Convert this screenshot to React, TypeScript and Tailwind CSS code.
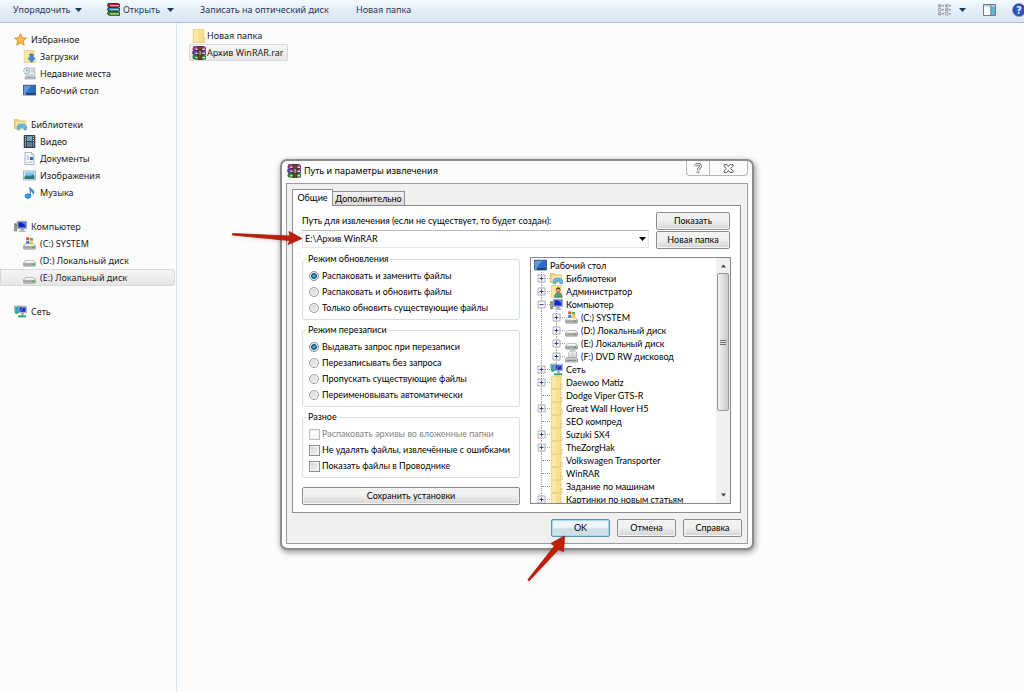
import { useState } from 'react'
import type { ReactNode } from 'react'

type IconName =
  | 'star' | 'downloads' | 'recent' | 'desktop' | 'libraries' | 'video' | 'documents'
  | 'pictures' | 'music' | 'computer' | 'system' | 'drive' | 'dvd' | 'network'
  | 'folder' | 'user' | 'rar' | 'books'

const driveBody = (
  <>
    <path d="M3.5 8h9L15.5 10.8v2.9q0 1.3-1.3 1.3H1.8Q.5 15 .5 13.7v-2.9z" fill="#c4c6c8" stroke="#8c8f92" strokeWidth=".8" />
    <path d="M3.8 8.4h8.4l2.4 2.4H1.4z" fill="#f6f6f6" />
    <path d="M1 11.4h14v2.6H1z" fill="#a2a5a7" />
    <path d="M11 11.8h3v1.8h-3z" fill="#4fae3a" />
  </>
)

const folderBody = (
  <>
    <path d="M1.5.5h12.2v15H1.5z" fill="#f7df8e" stroke="#e6c66c" strokeWidth=".8" />
    <path d="M2.2 1.2h5v13.6h-5z" fill="#fae8a8" />
    <path d="M13 10.5h2.2v5H13z" fill="#fdf6da" stroke="#c9ae68" strokeWidth=".6" />
  </>
)

const bookStack = (
  <>
    <path d="M2 .5h12l1.5 1.5v3H3.5L1 4z" fill="#b8379f" stroke="#4b1442" strokeWidth=".8" />
    <path d="M4 3h11v1.6H4z" fill="#f0d9ec" />
    <path d="M1 5.5h13l1.5 1v3.5H3L.8 9z" fill="#7a45b0" stroke="#2a1450" strokeWidth=".8" />
    <path d="M4 7.6h11v1.5H4z" fill="#dbe4f7" />
    <path d="M1.5 10.5h13l1 1.2V15H3.5L1 14z" fill="#2f9c3c" stroke="#0e4315" strokeWidth=".8" />
    <path d="M4 12.7h11v1.4H4z" fill="#dcf3d9" />
  </>
)

const drawings: Record<IconName, ReactNode> = {
  star: (
    <path
      d="M8 .8l2.1 4.9 5.3.5-4 3.5 1.2 5.3L8 12.2 3.4 15l1.2-5.3-4-3.5 5.3-.5z"
      fill="#fdbb3d" stroke="#e08127" strokeLinejoin="round"
    />
  ),
  downloads: (
    <>
      {folderBody}
      <path d="M8.5 5h4v5H15l-4.5 5.2L6 10h2.5z" fill="#2f8fe0" stroke="#1c63ad" strokeWidth=".7" />
    </>
  ),
  recent: (
    <>
      <path d="M4.5 1.5h10v11h-10z" fill="#eef1f3" stroke="#9aa4ac" strokeWidth=".9" />
      <path d="M6 9.5h7M6 11.3h7M9.5 4h4M9.5 6h4" stroke="#aab4bd" />
      <path d="M2.5 12.5h12.8v2.3H2.5z" fill="#b9c1c8" stroke="#8b959d" strokeWidth=".7" />
      <circle cx="4.6" cy="4.6" r="3.8" fill="#e3f0f6" stroke="#8fa9b8" />
      <path d="M4.6 2.4v2.4h2" fill="none" stroke="#577a8d" />
    </>
  ),
  desktop: (
    <>
      <path d="M.5 1.5h15v12H.5z" fill="#2f6cc4" stroke="#27436f" />
      <path d="M1 2h9L3 11H1z" fill="#5f9ae0" />
      <path d="M1 11.3h14v1.8H1z" fill="#213a5c" />
      <path d="M1 11.3h2.5v1.8H1z" fill="#9cc4ea" />
    </>
  ),
  libraries: (
    <>
      <path d="M.6 2h5l1.2 1.6h7.6V13H.6z" fill="#f2d675" stroke="#cfa94a" strokeWidth=".8" />
      <path d="M2.5 4.6h12.8v8H2.5z" fill="#fbe9a5" />
      <path d="M4 14.6V9.8L6 7.6h7l2.3 2.2v4.8h-3v-3.3H7v3.3z" fill="#6cbbe8" stroke="#3b8ec4" strokeWidth=".8" />
    </>
  ),
  video: (
    <>
      <path d="M1.5.5h13v15h-13z" fill="#27323c" stroke="#1a222a" />
      <path d="M4.5 1.5h7v6h-7z" fill="#6fb1dc" />
      <path d="M4.5 8.5h7v6h-7z" fill="#4a86b8" />
      <path d="M5 6l2.5-2.5L11 7M5 13l3-2.5 3 2" fill="none" stroke="#b85f4a" />
      <path d="M3 1v14M13 1v14" stroke="#e4e9ed" strokeWidth="1.2" strokeDasharray="1.5 1.2" />
    </>
  ),
  documents: (
    <>
      <path d="M2.5.5h8L13.5 3.5v12h-11z" fill="#fbfcfd" stroke="#8f9eae" />
      <path d="M10.5.5v3h3" fill="#dbe4ee" stroke="#8f9eae" strokeWidth=".8" />
      <path d="M4.5 5h3M4.5 7h3M4.5 9h3M4.5 12.5h7" stroke="#8fa6c0" strokeWidth=".9" />
      <path d="M8.5 6h4v4h-4z" fill="#2c6cb8" />
    </>
  ),
  pictures: (
    <>
      <path d="M.5 2.5h15v11H.5z" fill="#fdfdfd" stroke="#8c9aa6" />
      <path d="M2 4h12v8H2z" fill="#79c3ee" />
      <path d="M2 9c3-2 5 0 7-.8s4-1 5-.4V12H2z" fill="#2c8477" />
      <path d="M2 10.8h12V12H2z" fill="#245c88" />
    </>
  ),
  music: (
    <>
      <path d="M8 1.2c.6 2.4 5.5 3.2 5.6 6.2 0 1.6-.7 2.5-1.2 3 .2-2.6-1.6-3.8-3-4.2v6z" fill="#2f93dc" stroke="#1c6cb2" strokeWidth=".6" />
      <ellipse cx="6" cy="12.4" rx="3.6" ry="2.9" fill="#3aa0e8" stroke="#1c6cb2" strokeWidth=".7" />
    </>
  ),
  computer: (
    <>
      <path d="M.6 4.5h2.8v9H.6z" fill="#8fa08d" stroke="#5e6b60" strokeWidth=".7" />
      <path d="M1 6h2" stroke="#3fa645" strokeWidth="1.2" />
      <path d="M4 1.5h11.5v9H4z" fill="#b9c2d8" stroke="#7e879c" strokeWidth=".8" />
      <path d="M5.3 2.7h9v6.6h-9z" fill="#1226c0" />
      <path d="M9 2.7h5.3v4z" fill="#5f7cf0" />
      <path d="M8 10.5h4v2H8zM6 12.8h8v1.6H6z" fill="#9aa3b0" />
    </>
  ),
  system: (
    <>
      {driveBody}
      <path d="M4 .8c1.2-.6 2.4-.5 3.7 0v3.5C6.4 3.8 5.2 3.8 4 4.3z" fill="#e5502a" />
      <path d="M8.5.8c1.3.5 2.5.6 3.9 0v3.5c-1.4.6-2.6.5-3.9 0z" fill="#63b53a" />
      <path d="M4 5.2c1.2-.6 2.4-.5 3.7 0v3.3C6.4 8 5.2 8 4 8.5z" fill="#2f78d8" />
      <path d="M8.5 5.2c1.3.5 2.5.6 3.9 0v3.3c-1.4.6-2.6.5-3.9 0z" fill="#f8c22c" />
    </>
  ),
  drive: driveBody,
  dvd: (
    <>
      <circle cx="9.5" cy="5.6" r="5" fill="#dcdfe3" stroke="#8b9197" strokeWidth=".8" />
      <path d="M9.5 5.6L13 2.2M9.5 5.6L5.5 3" stroke="#fff" strokeWidth="1.4" />
      <circle cx="9.5" cy="5.6" r="1.5" fill="#fff" stroke="#8b9197" strokeWidth=".7" />
      <path d="M2.5 9h11l2 2.2v3.6H.5v-3.6z" fill="#c3c6c9" stroke="#8c8f92" strokeWidth=".8" />
      <path d="M2 12.8h12" stroke="#6f7376" />
    </>
  ),
  network: (
    <>
      <path d="M.6 1.2h8v6h-8z" fill="#c2cbdc" stroke="#7e879c" strokeWidth=".7" />
      <path d="M1.6 2.2h6v4h-6z" fill="#2fa5c8" />
      <path d="M5.5 1.6h10v8h-10z" fill="#c2cbdc" stroke="#7e879c" strokeWidth=".7" />
      <path d="M6.7 2.8h7.6v5.6H6.7z" fill="#1a30c4" />
      <path d="M8 8l2.8-5h2.6" fill="none" stroke="#86a4f5" />
      <circle cx="3.4" cy="8.6" r="2.6" fill="#39a98a" />
      <path d="M9 9.7h3v3H9z" fill="#98a2ae" />
      <path d="M5 12.7h10v2.5H5z" fill="#35a06f" />
    </>
  ),
  folder: folderBody,
  user: (
    <>
      {folderBody}
      <circle cx="10" cy="6.2" r="2.6" fill="#d9a273" stroke="#7a5232" strokeWidth=".7" />
      <path d="M7.4 5.4c.4-3 5-3 5.2 0-1.6-.8-3.4-.8-5.2 0z" fill="#5d3d22" />
      <path d="M5.5 15c0-7.6 9.2-7.6 9.4 0z" fill="#5b9a8e" stroke="#376c61" strokeWidth=".7" />
    </>
  ),
  rar: (
    <>
      {bookStack}
      <path d="M6.8.3h4.6v15.4H6.8z" fill="#6f4326" stroke="#33200f" strokeWidth=".7" />
      <path d="M7.2 5.6h3.8v4.6H7.2z" fill="#e3dccb" stroke="#33200f" strokeWidth=".8" />
      <path d="M9 6.4v3" stroke="#33200f" />
    </>
  ),
  books: (
    <>
      <path d="M1.5.6H13l2.4.8v3.4H3L.6 3.6z" fill="#c0272d" stroke="#2b0809" />
      <path d="M4 2.9h11v1.2H4z" fill="#f7e9cf" />
      <path d="M1.5 5.5H13l2.4.8v3.4H3L.6 8.5z" fill="#1e8fb0" stroke="#0a2029" />
      <path d="M4 7.8h11V9H4z" fill="#e0f3f7" />
      <path d="M1.5 10.4H13l2.4.8v4H3L.6 13.6z" fill="#3c8f2e" stroke="#12330c" />
      <path d="M4 12.9h11v1.2H4z" fill="#f0e7b4" />
    </>
  ),
}

function Icon({ name, className = 'size-[13px]' }: { name: IconName; className?: string }) {
  return (
    <svg viewBox="0 0 16 16" className={`shrink-0 ${className}`} aria-hidden="true">
      {drawings[name]}
    </svg>
  )
}

function Caret({ className = 'w-[7px]' }: { className?: string }) {
  return (
    <svg viewBox="0 0 7 4" className={`h-1 shrink-0 ${className}`} aria-hidden="true">
      <path d="M0 0h7L3.5 4z" fill="currentColor" />
    </svg>
  )
}

const navGroups: { title: string; icon: IconName; items: { label: string; icon: IconName; active?: boolean }[] }[] = [
  {
    title: 'Избранное',
    icon: 'star',
    items: [
      { label: 'Загрузки', icon: 'downloads' },
      { label: 'Недавние места', icon: 'recent' },
      { label: 'Рабочий стол', icon: 'desktop' },
    ],
  },
  {
    title: 'Библиотеки',
    icon: 'libraries',
    items: [
      { label: 'Видео', icon: 'video' },
      { label: 'Документы', icon: 'documents' },
      { label: 'Изображения', icon: 'pictures' },
      { label: 'Музыка', icon: 'music' },
    ],
  },
  {
    title: 'Компьютер',
    icon: 'computer',
    items: [
      { label: '(C:) SYSTEM', icon: 'system' },
      { label: '(D:) Локальный диск', icon: 'drive' },
      { label: '(E:) Локальный диск', icon: 'drive', active: true },
    ],
  },
  { title: 'Сеть', icon: 'network', items: [] },
]

type TreeNode = { label: string; icon: IconName; level: number; toggle?: '+' | '-' }

const tree: TreeNode[] = [
  { label: 'Рабочий стол', icon: 'desktop', level: 0 },
  { label: 'Библиотеки', icon: 'libraries', level: 1, toggle: '+' },
  { label: 'Администратор', icon: 'user', level: 1, toggle: '+' },
  { label: 'Компьютер', icon: 'computer', level: 1, toggle: '-' },
  { label: '(C:) SYSTEM', icon: 'system', level: 2, toggle: '+' },
  { label: '(D:) Локальный диск', icon: 'drive', level: 2, toggle: '+' },
  { label: '(E:) Локальный диск', icon: 'drive', level: 2, toggle: '+' },
  { label: '(F:) DVD RW дисковод', icon: 'dvd', level: 2, toggle: '+' },
  { label: 'Сеть', icon: 'network', level: 1, toggle: '+' },
  { label: 'Daewoo Matiz', icon: 'folder', level: 1, toggle: '+' },
  { label: 'Dodge Viper GTS-R', icon: 'folder', level: 1 },
  { label: 'Great Wall Hover H5', icon: 'folder', level: 1, toggle: '+' },
  { label: 'SEO компред', icon: 'folder', level: 1 },
  { label: 'Suzuki SX4', icon: 'folder', level: 1, toggle: '+' },
  { label: 'TheZorgHak', icon: 'folder', level: 1, toggle: '+' },
  { label: 'Volkswagen Transporter', icon: 'folder', level: 1 },
  { label: 'WinRAR', icon: 'folder', level: 1 },
  { label: 'Задание по машинам', icon: 'folder', level: 1 },
  { label: 'Картинки по новым статьям', icon: 'folder', level: 1, toggle: '+' },
]

const updateModes = ['Распаковать и заменить файлы', 'Распаковать и обновить файлы', 'Только обновить существующие файлы']
const overwriteModes = [
  'Выдавать запрос при перезаписи',
  'Перезаписывать без запроса',
  'Пропускать существующие файлы',
  'Переименовывать автоматически',
]

function Toolbar() {
  return (
    <header className="flex h-[23px] items-center border-b border-[#a9bcd2] bg-linear-to-b from-[#f5f9fe] via-[#e3edf8] to-[#dae6f4] pb-[3px] pl-[13px] text-[#1e395b]">
      <button className="flex w-[94px] items-center gap-1">
        Упорядочить <Caret />
      </button>
      <button className="flex w-[93px] items-center gap-[3px]">
        <Icon name="books" />
        Открыть
        <Caret className="ml-1 w-[7px]" />
      </button>
      <button className="w-[156px] text-left">Записать на оптический диск</button>
      <button>Новая папка</button>
      <div className="-mr-0.5 ml-auto flex items-center">
        <button aria-label="Изменить представление" className="mr-[17px] flex items-center gap-2">
          <svg viewBox="0 0 13 12" className="h-3 w-[13px]" aria-hidden="true">
            {[0, 4, 8].map((y) => (
              <g key={y}>
                <path d={`M.5 ${y + 0.5}h2.5v2.5H.5z M7.5 ${y + 0.5}h2.5v2.5H7.5z`} fill="#eef1f4" stroke="#9299a3" strokeWidth=".8" />
                <path d={`M4 ${y + 1.8}h2 M11 ${y + 1.8}h2`} stroke="#6f7884" />
              </g>
            ))}
            <path d="M1.2 1.2h1.2v1.2H1.2zM8.2 5.2h1.2v1.2H8.2z" fill="#d0654f" />
            <path d="M8.2 1.2h1.2v1.2H8.2zM1.2 9.2h1.2v1.2H1.2z" fill="#55a06a" />
          </svg>
          <Caret />
        </button>
        <button aria-label="Область просмотра" className="mr-4">
          <svg viewBox="0 0 13 12" className="h-3 w-[13px]" aria-hidden="true">
            <path d="M.5.5h12v11H.5z" fill="#fdfdfd" stroke="#68788a" />
            <path d="M1 1h11v1.6H1z" fill="#b9cadb" />
            <path d="M8 2.6h4V11H8z" fill="#62b5d2" />
            <path d="M7.8 1v10" stroke="#68788a" />
          </svg>
        </button>
        <button aria-label="Справка" className="size-[14px] rounded-full border border-[#8d96a8] bg-radial from-[#3f6be0] to-[#15329c] text-center text-[10px] leading-[12px] font-bold text-white">
          ?
        </button>
      </div>
    </header>
  )
}

function Sidebar() {
  return (
    <nav className="flex w-[177px] shrink-0 flex-col gap-[17px] border-r border-[#d5e5f5] pt-2">
      {navGroups.map((group) => (
        <div key={group.title}>
          <a href="#" className="flex h-[17px] items-center gap-1 pl-[14px]">
            <Icon name={group.icon} />
            {group.title}
          </a>
          {group.items.map((item) => (
            <a
              key={item.label}
              href="#"
              className={`mr-px flex h-[17px] items-center gap-1 rounded-r-sm pl-[23px] ${
                item.active ? 'bg-linear-to-b from-[#f6f6f6] to-[#e4e4e4] ring-1 ring-[#d9d9d9] ring-inset' : ''
              }`}
            >
              <Icon name={item.icon} />
              {item.label}
            </a>
          ))}
        </div>
      ))}
    </nav>
  )
}

function Choice({ type, name, label, checked, disabled, onChange }: {
  type: 'radio' | 'checkbox'
  name: string
  label: string
  checked: boolean
  disabled?: boolean
  onChange: () => void
}) {
  const shape =
    type === 'radio'
      ? 'mr-px size-[10px] rounded-full border-[#9a9b9b] checked:border-[#7890a0] checked:bg-radial checked:from-[#3fb0e0] checked:from-15% checked:via-[#123f5c] checked:via-45% checked:to-[#e8f0f4] checked:to-65%'
      : 'size-[11px] border-[#8e8f8f] disabled:border-[#bcbcbc] disabled:from-[#fafafa] disabled:to-[#fafafa]'
  return (
    <label className={`flex h-4 items-center gap-[2px] whitespace-nowrap ${disabled ? 'text-[#838383]' : ''}`}>
      <input
        type={type}
        name={name}
        checked={checked}
        disabled={disabled}
        onChange={onChange}
        className={`shrink-0 appearance-none border bg-linear-to-br from-[#cdd0d4] to-[#f8f8f8] shadow-[inset_0_0_0_1px_#f4f4f4] ${shape}`}
      />
      {label}
    </label>
  )
}

function Group({ title, children }: { title: string; children: ReactNode }) {
  return (
    <fieldset className="min-w-0 rounded-[3px] border border-[#d5dfe5] px-1.5 pt-[3px] pb-[3px]">
      <legend className="-ml-0.5 px-px leading-3">{title}</legend>
      {children}
    </fieldset>
  )
}

function PushButton({ children, className = '', primary }: { children: ReactNode; className?: string; primary?: boolean }) {
  return (
    <button
      className={`h-[18px] rounded-[2px] border text-center leading-4 ${
        primary
          ? 'border-[#5c93ad] bg-linear-to-b from-[#eef5f8] from-45% to-[#cfdfe7] to-55% shadow-[inset_0_0_0_1px_#a4dcef]'
          : 'border-[#8a8a8a] bg-linear-to-b from-[#f1f1f1] from-45% to-[#d3d3d3] shadow-[inset_0_0_0_1px_#f6f6f6]'
      } ${className}`}
    >
      {children}
    </button>
  )
}

function Toggle({ sign }: { sign: '+' | '-' }) {
  return (
    <svg viewBox="0 0 9 9" className="size-[9px]" aria-hidden="true">
      <path d="M1 1h7v7H1z" fill="#f8f8f8" stroke="#a6a6a6" strokeWidth=".9" />
      <path d={sign === '+' ? 'M2.5 4.5h4M4.5 2.5v4' : 'M2.5 4.5h4'} stroke="#33479a" />
    </svg>
  )
}

function TreeRow({ node }: { node: TreeNode }) {
  if (node.level === 0) {
    return (
      <li className="flex h-[13px] items-center gap-[3px] pl-[3px]">
        <Icon name={node.icon} />
        {node.label}
      </li>
    )
  }
  return (
    <li className="flex h-[13px] items-center pl-1.5">
      {node.level === 2 && <span className="ml-1 h-full w-[11px] border-l border-dotted border-[#a0a0a0]" />}
      <span className="relative flex h-full w-[13px] shrink-0 items-center">
        <span className="ml-1 h-full w-px border-l border-dotted border-[#a0a0a0]" />
        <span className="w-2 border-t border-dotted border-[#a0a0a0]" />
        {node.toggle && (
          <button className="absolute top-0.5 left-0" aria-label={node.toggle === '+' ? 'Развернуть' : 'Свернуть'}>
            <Toggle sign={node.toggle} />
          </button>
        )}
      </span>
      <Icon name={node.icon} />
      <span className="ml-[3px] whitespace-nowrap">{node.label}</span>
    </li>
  )
}

function FolderTree() {
  return (
    <div className="mt-1 flex h-[247px] min-w-0 flex-1 overflow-hidden border border-[#828790] bg-white">
      <ul className="min-w-0 flex-1 overflow-hidden pt-px leading-[13px]">
        {tree.map((node) => (
          <TreeRow key={node.label} node={node} />
        ))}
      </ul>
      <div className="flex w-[14px] flex-col items-center bg-[#f0f0f0] py-1.5 text-[#404040]">
        <Caret className="w-[5px] rotate-180" />
        <div className="mt-[5px] flex h-[138px] w-3 flex-col items-center justify-center gap-px rounded-[2px] border border-[#979797] bg-linear-to-r from-[#f3f3f3] to-[#c9c9cb]">
          <span className="h-px w-1.5 bg-[#6d6d6d]" />
          <span className="h-px w-1.5 bg-[#6d6d6d]" />
          <span className="h-px w-1.5 bg-[#6d6d6d]" />
        </div>
        <Caret className="mt-auto w-[5px]" />
      </div>
    </div>
  )
}

function ExtractDialog() {
  const [update, setUpdate] = useState(0)
  const [overwrite, setOverwrite] = useState(0)
  const [keepBroken, setKeepBroken] = useState(false)
  const [showFiles, setShowFiles] = useState(false)

  return (
    <section
      role="dialog"
      aria-label="Путь и параметры извлечения"
      className="absolute top-[159px] left-[280px] w-[474px] rounded-[7px] border-2 border-[#8a8c8d] bg-[#fbfbfb] px-1 pb-1 font-['Lato','Liberation_Sans',sans-serif] text-[9px] text-black shadow-[1px_2px_6px_rgba(0,0,0,0.45)]"
    >
      <div className="flex h-[22px] items-start">
        <Icon name="rar" className="mt-[3px] ml-px size-[14px]" />
        <h1 className="mt-[3px] ml-[3px] font-['Noto_Sans','Open_Sans',sans-serif] leading-[14px]">Путь и параметры извлечения</h1>
        <div className="ml-auto flex h-[15px] overflow-hidden rounded-b-[4px] border border-t-0 border-[#b4b6b8]">
          <button aria-label="Справка" className="flex w-[23px] items-center justify-center border-r border-[#b4b6b8]">
            <svg viewBox="0 0 8 11" className="h-[11px] w-2" aria-hidden="true">
              <path d="M1.5 3.2C1.5.6 6.5.6 6.5 3.2 6.5 5 4 5 4 7.2M4 8.6v1.6" fill="none" stroke="#5a5f69" strokeWidth="2.6" />
              <path d="M1.5 3.2C1.5.6 6.5.6 6.5 3.2 6.5 5 4 5 4 7.2M4 8.8v1.2" fill="none" stroke="#fff" strokeWidth="1.1" />
            </svg>
          </button>
          <button aria-label="Закрыть" className="flex w-[37px] items-center justify-center">
            <svg viewBox="0 0 11 9" className="h-[9px] w-[11px]" aria-hidden="true">
              <path d="M1 .6h3l1.5 2L7 .6h3v1.6L7.6 4.5 10 6.8v1.6H7l-1.5-2-1.5 2H1V6.8l2.4-2.3L1 2.2z" fill="#fff" stroke="#5a5f69" />
            </svg>
          </button>
        </div>
      </div>

      <div className="border border-[#9a9c9f] bg-[#f0f0f0] px-[5px] pt-[5px] pb-1.5">
        <div role="tablist" className="flex items-end">
          <button role="tab" aria-selected="true" className="relative -mb-px h-[17px] w-[41px] border border-b-0 border-[#8c8e94] bg-white pb-px leading-[14px]">
            Общие
          </button>
          <button role="tab" aria-selected="false" className="h-[14px] w-[72px] border border-b-0 border-l-0 border-[#8c8e94] bg-linear-to-b from-[#f2f2f2] to-[#dadada] leading-[13px]">
            Дополнительно
          </button>
        </div>

        <div role="tabpanel" className="mr-px border border-[#8c8e94] bg-white px-[9px] pt-1.5 pb-[7px]">
          <div className="flex gap-[7px]">
            <div className="flex-1">
              <label htmlFor="path" className="block h-[18px] pt-0.5 leading-[14px]">
                Путь для извлечения (если не существует, то будет создан):
              </label>
              <div className="relative">
                <select id="path" className="block h-[18px] w-full appearance-none border border-[#dfe7ef] border-t-[#b5bcc6] bg-white pl-0.5 leading-4">
                  <option>E:\Архив WinRAR</option>
                </select>
                <Caret className="pointer-events-none absolute top-[7px] right-[3px] w-[7px] text-black" />
              </div>
            </div>
            <div className="mr-px flex w-[74px] flex-col gap-px">
              <PushButton>Показать</PushButton>
              <PushButton>Новая папка</PushButton>
            </div>
          </div>

          <div className="mt-1 flex gap-2.5">
            <div className="flex w-[218px] flex-col">
              <div className="flex flex-col gap-1">
                <Group title="Режим обновления">
                  {updateModes.map((mode, i) => (
                    <Choice key={mode} type="radio" name="update" label={mode} checked={update === i} onChange={() => setUpdate(i)} />
                  ))}
                </Group>
                <Group title="Режим перезаписи">
                  {overwriteModes.map((mode, i) => (
                    <Choice key={mode} type="radio" name="overwrite" label={mode} checked={overwrite === i} onChange={() => setOverwrite(i)} />
                  ))}
                </Group>
                <Group title="Разное">
                  <Choice type="checkbox" name="nested" label="Распаковать архивы во вложенные папки" checked={false} disabled onChange={() => {}} />
                  <Choice type="checkbox" name="broken" label="Не удалять файлы, извлечённые с ошибками" checked={keepBroken} onChange={() => setKeepBroken(!keepBroken)} />
                  <Choice type="checkbox" name="show" label="Показать файлы в Проводнике" checked={showFiles} onChange={() => setShowFiles(!showFiles)} />
                </Group>
              </div>
              <PushButton className="mt-[9px]">Сохранить установки</PushButton>
            </div>
            <FolderTree />
          </div>
        </div>

        <div className="mt-1.5 flex justify-end gap-[7px]">
          <PushButton primary className="w-[59px]">OK</PushButton>
          <PushButton className="w-[59px]">Отмена</PushButton>
          <PushButton className="w-[59px]">Справка</PushButton>
        </div>
      </div>
    </section>
  )
}

function App() {
  return (
    <div className="relative flex min-h-screen flex-col overflow-hidden bg-[#fcfcfc] font-['Noto_Sans','Open_Sans',sans-serif] text-[9px] text-[#1a1a1a]">
      <Toolbar />
      <div className="flex flex-1">
        <Sidebar />
        <main className="flex flex-1 flex-col items-start pt-1 pl-3">
          <button className="flex h-[17px] items-center gap-px pl-[3px]">
            <Icon name="folder" className="size-[14px]" />
            Новая папка
          </button>
          <button className="flex h-[17px] items-center gap-px rounded-[2px] bg-linear-to-b from-[#f8f8f8] to-[#e6e6e6] pr-1 pl-[3px] ring-1 ring-[#d9d9d9] ring-inset">
            <Icon name="rar" className="size-[14px]" />
            Архив WinRAR.rar
          </button>
        </main>
      </div>

      <ExtractDialog />

      {/* pointer to the path field */}
      <svg viewBox="0 0 72 16" className="pointer-events-none absolute top-[230px] left-[231px] h-4 w-[72px] drop-shadow-sm" aria-hidden="true">
        <path d="M1.5 3.6L59 6 58 1.5 71 8.5 57 14.5 59 10.6 1.5 5z" fill="#c11e05" stroke="#a01a06" strokeWidth=".8" strokeLinejoin="round" />
      </svg>
      {/* pointer to the OK button */}
      <svg viewBox="0 0 40 48" className="pointer-events-none absolute top-[534px] left-[526px] h-12 w-10 drop-shadow-sm" aria-hidden="true">
        <path d="M2 45.5L28.4 12 25 9.5 38.5 2 37.5 17.5 32.5 15.4 3 47z" fill="#c11e05" stroke="#a01a06" strokeWidth=".8" strokeLinejoin="round" />
      </svg>
    </div>
  )
}

export default App
